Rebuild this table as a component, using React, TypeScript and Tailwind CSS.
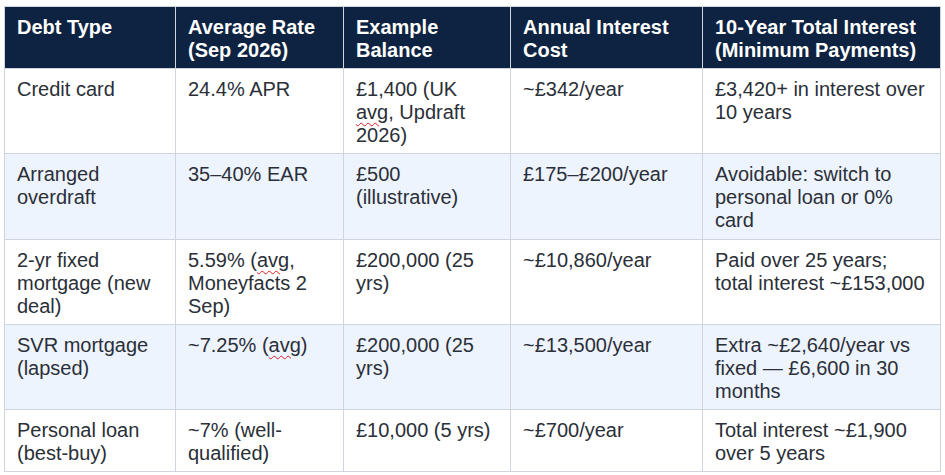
import React from "react";

type Cell = React.ReactNode;

const Sq = ({ children }: { children: React.ReactNode }) => (
  <span className="underline decoration-wavy decoration-[#e02020] decoration-1 underline-offset-[3px]">
    {children}
  </span>
);

const headers = [
  "Debt Type",
  "Average Rate (Sep 2026)",
  "Example Balance",
  "Annual Interest Cost",
  "10-Year Total Interest (Minimum Payments)",
];

const rows: Cell[][] = [
  [
    "Credit card",
    "24.4% APR",
    <>
      £1,400 (UK <Sq>avg</Sq>, Updraft 2026)
    </>,
    "~£342/year",
    "£3,420+ in interest over 10 years",
  ],
  [
    "Arranged overdraft",
    "35–40% EAR",
    "£500 (illustrative)",
    "£175–£200/year",
    "Avoidable: switch to personal loan or 0% card",
  ],
  [
    "2-yr fixed mortgage (new deal)",
    <>
      5.59% (<Sq>avg</Sq>, Moneyfacts 2 Sep)
    </>,
    "£200,000 (25 yrs)",
    "~£10,860/year",
    "Paid over 25 years; total interest ~£153,000",
  ],
  [
    "SVR mortgage (lapsed)",
    <>
      ~7.25% (<Sq>avg</Sq>)
    </>,
    "£200,000 (25 yrs)",
    "~£13,500/year",
    "Extra ~£2,640/year vs fixed — £6,600 in 30 months",
  ],
  [
    "Personal loan (best-buy)",
    "~7% (well-qualified)",
    "£10,000 (5 yrs)",
    "~£700/year",
    "Total interest ~£1,900 over 5 years",
  ],
];

const rowHeights = ["h-[85px]", "h-[86px]", "h-[85px]", "h-[85px]", "h-[61px]"];

export default function App() {
  return (
    <div className="w-[945px] h-[475px] bg-white pt-[6px] pl-[4px] font-['Liberation_Sans',Arial,sans-serif]">
      <table className="table-fixed border-collapse w-[936px] text-[20px] leading-[23px]">
        <colgroup>
          <col className="w-[171px]" />
          <col className="w-[168px]" />
          <col className="w-[167px]" />
          <col className="w-[192px]" />
          <col className="w-[238px]" />
        </colgroup>
        <thead>
          <tr className="bg-[#0e2341] h-[62px]">
            {headers.map((h) => (
              <th
                key={h}
                className="border border-[#d0d5dd] text-left align-top font-bold text-white pl-3 pr-[14px] pt-[9px] pb-[6px]"
              >
                {h}
              </th>
            ))}
          </tr>
        </thead>
        <tbody>
          {rows.map((r, i) => (
            <tr
              key={i}
              className={`${rowHeights[i]} ${i % 2 === 1 ? "bg-[#eef4fe]" : "bg-white"}`}
            >
              {r.map((c, j) => (
                <td
                  key={j}
                  className="border border-[#d0d5dd] align-top text-[#2a2f38] pl-3 pr-[14px] pt-[9px] pb-[6px]"
                >
                  {c}
                </td>
              ))}
            </tr>
          ))}
        </tbody>
      </table>
    </div>
  );
}
